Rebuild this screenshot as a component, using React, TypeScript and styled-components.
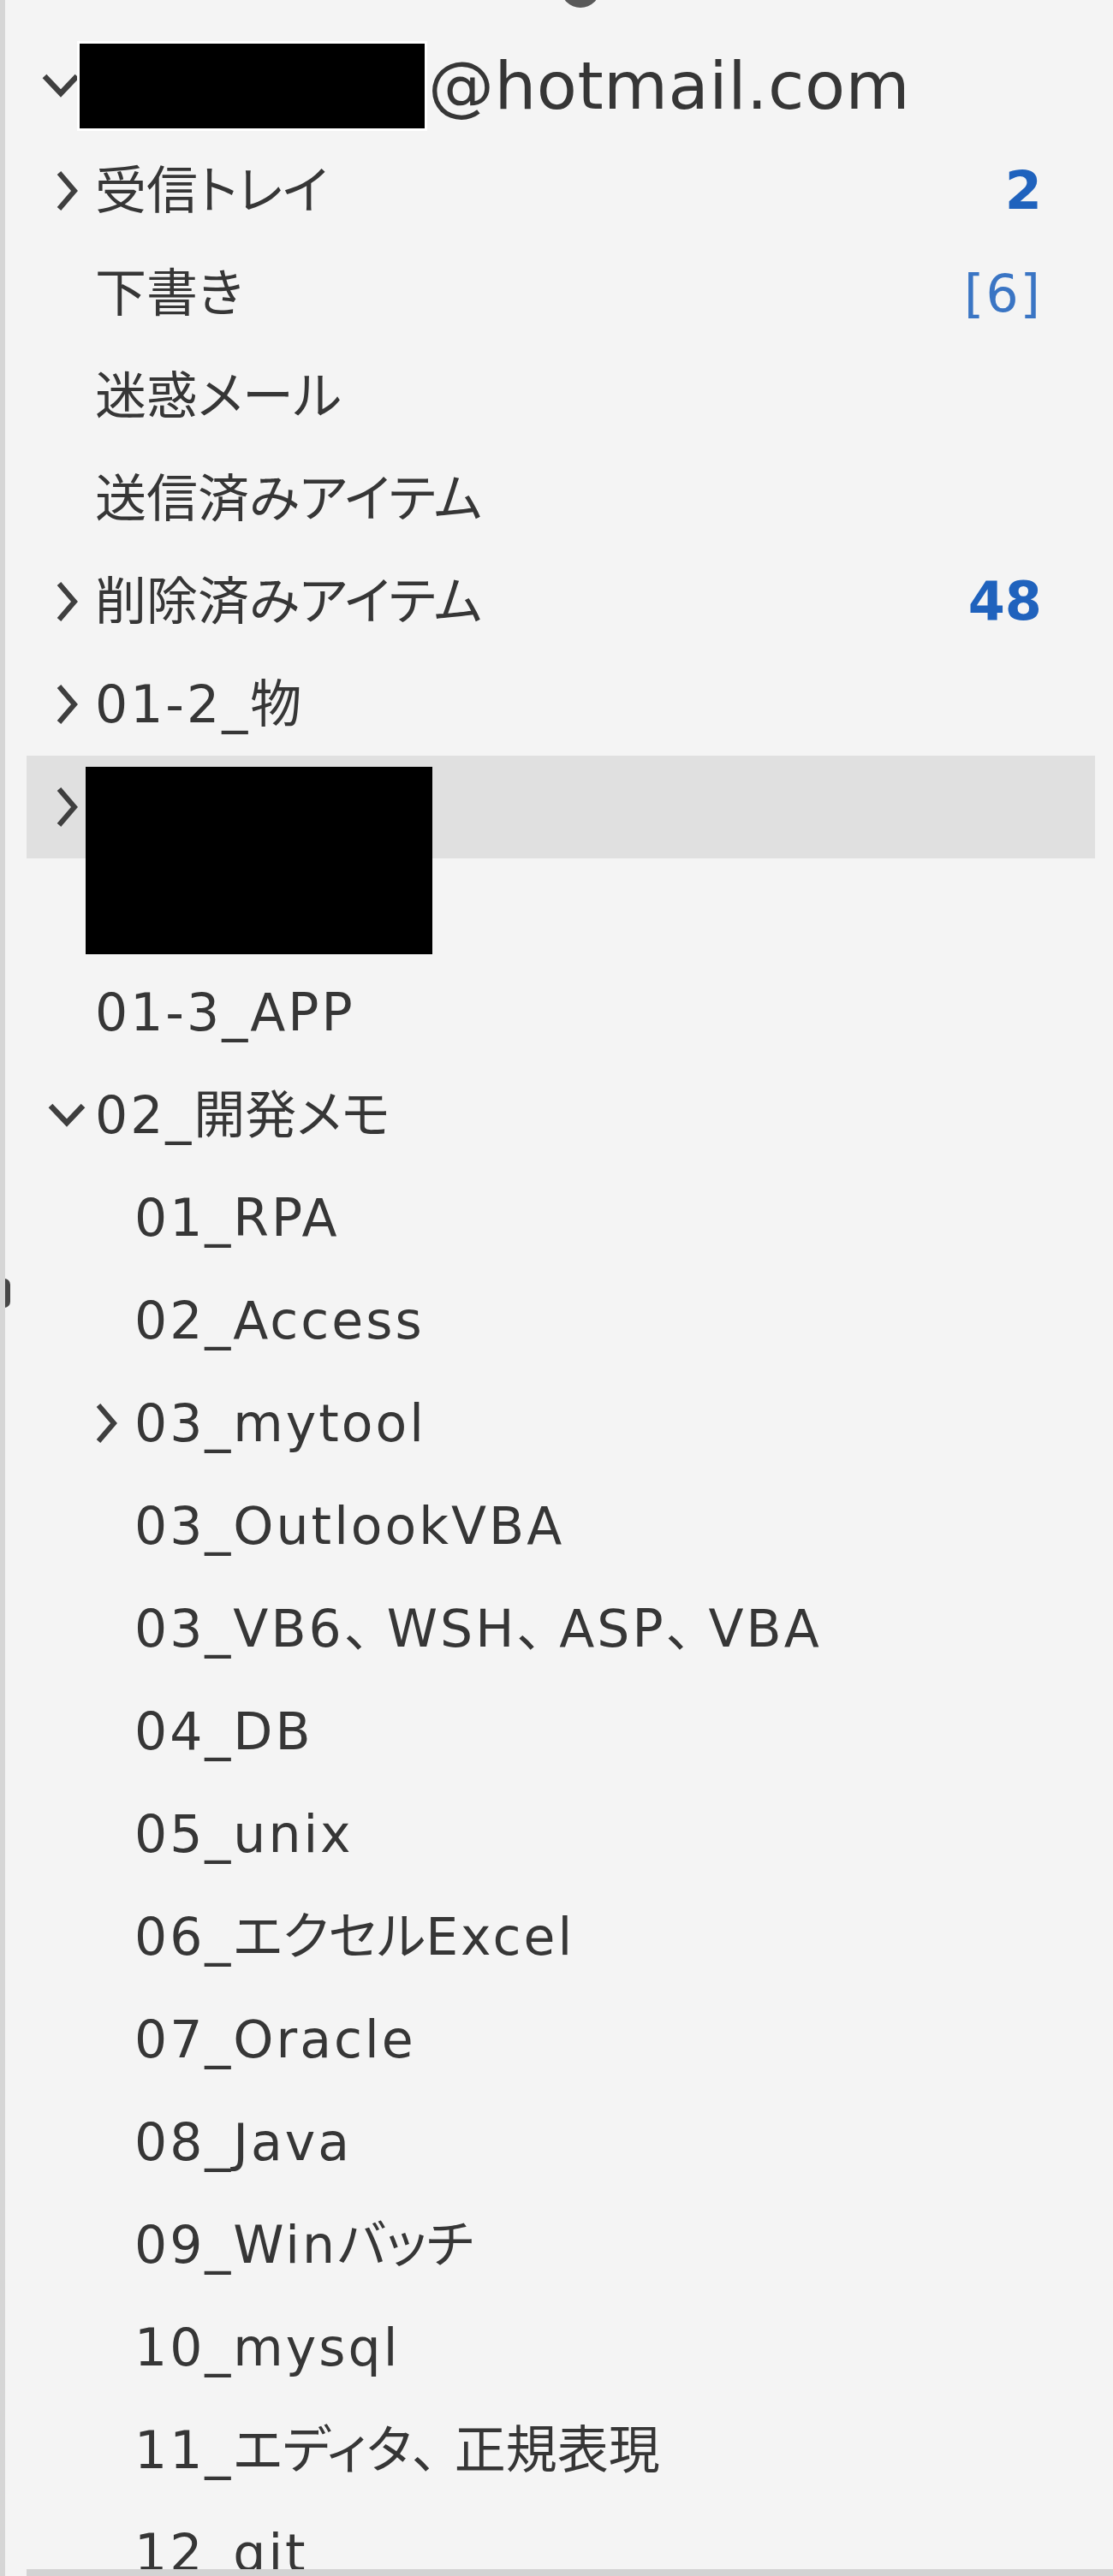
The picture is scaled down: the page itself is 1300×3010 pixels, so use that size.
import React from "react";
import styled, { createGlobalStyle } from "styled-components";

const GlobalStyle = createGlobalStyle`
  html, body {
    margin: 0;
    padding: 0;
    background: #f4f4f4;
  }
`;

const Pane = styled.div`
  position: relative;
  box-sizing: border-box;
  width: 1300px;
  height: 3010px;
  overflow: hidden;

  background-color: #f4f4f4;
  border-left: 6px solid #d6d6d6;

  font-family: "DejaVu Sans", "Noto Sans CJK JP", sans-serif;
  font-feature-settings: "palt";
  color: #363636;
`;

const TopDot = styled.div`
  position: absolute;
  top: -37px;
  left: 649px;
  width: 46px;
  height: 46px;
  border-radius: 50%;
  background-color: #595959;
`;

const SplitterGrip = styled.div`
  position: absolute;
  top: 1494px;
  left: -6px;
  width: 12px;
  height: 34px;
  border-radius: 0 7px 7px 0;
  background-color: #474747;
`;

const ScrollEdge = styled.div`
  position: absolute;
  left: 25px;
  right: 0;
  bottom: 0;
  height: 8px;
  background-color: #d3d3d3;
`;

const Tree = styled.div`
  display: flex;
  flex-direction: column;
  padding-top: 37px;
`;

const AccountRow = styled.div`
  display: flex;
  align-items: center;
  height: 126px;
  padding-left: 42px;

  font-size: 77px;
  line-height: 1;
  letter-spacing: 0.5px;
`;

const AccountChevron = styled.div`
  display: flex;
  align-items: center;
  width: 48px;
  margin-right: -3px;
`;

const Redaction = styled.div<{ $w: number; $h: number; $top?: number }>`
  flex: none;
  align-self: ${(p) => (p.$top !== undefined ? "flex-start" : "center")};
  margin-top: ${(p) => p.$top ?? 0}px;
  width: ${(p) => p.$w}px;
  height: ${(p) => p.$h}px;
  background-color: #000;
`;

const AccountRedaction = styled(Redaction)`
  box-shadow: 0 0 0 3px #ffffff;
  margin-right: 4px;
`;

const FolderRedaction = styled(Redaction)`
  margin-left: -11px;
`;

const Row = styled.div<{ $level: number; $selected?: boolean }>`
  display: flex;
  align-items: center;
  box-sizing: border-box;
  height: 120px;
  margin: 0 21px 0 25px;
  padding-left: ${(p) => 24 + (p.$level - 1) * 46}px;
  padding-right: 62px;

  background-color: ${(p) => (p.$selected ? "#e0e0e0" : "transparent")};
  font-size: 60px;
  line-height: 1;
  white-space: nowrap;
`;

const ChevronSlot = styled.div`
  flex: none;
  display: flex;
  align-items: center;
  width: 56px;
  height: 60px;
`;

const Label = styled.span`
  letter-spacing: 0;
`;

const Latin = styled.span`
  letter-spacing: 3px;
`;

const Comma = styled.span`
  font-feature-settings: normal;
  letter-spacing: -10px;
`;

const Count = styled.span<{ $bold?: boolean }>`
  margin-left: auto;
  font-size: ${(p) => (p.$bold ? 62 : 60)}px;
  font-weight: ${(p) => (p.$bold ? 700 : 400)};
  color: ${(p) => (p.$bold ? "#1f62bd" : "#3a75c4")};
  letter-spacing: ${(p) => (p.$bold ? 0 : 2)}px;
`;

const ChevronRight = () => (
  <svg width="40" height="48" viewBox="0 0 40 48" style={{ marginLeft: 10 }}>
    <polyline
      points="4,3 22,24 4,45"
      fill="none"
      stroke="#3f3f3f"
      strokeWidth="6"
      strokeLinejoin="miter"
    />
  </svg>
);

const ChevronDown = () => (
  <svg width="46" height="32" viewBox="0 0 46 32">
    <polyline
      points="4,5 23,25 42,5"
      fill="none"
      stroke="#3f3f3f"
      strokeWidth="6.5"
      strokeLinejoin="miter"
    />
  </svg>
);

type Folder = {
  name?: string;
  level: number;
  chevron?: "right" | "down";
  count?: string;
  bold?: boolean;
  selected?: boolean;
  redacted?: boolean;
};

const folders: Folder[] = [
  { name: "受信トレイ", level: 1, chevron: "right", count: "2", bold: true },
  { name: "下書き", level: 1, count: "[6]" },
  { name: "迷惑メール", level: 1 },
  { name: "送信済みアイテム", level: 1 },
  { name: "削除済みアイテム", level: 1, chevron: "right", count: "48", bold: true },
  { name: "01-2_物", level: 1, chevron: "right" },
  { level: 1, chevron: "right", selected: true, redacted: true },
  { level: 1 },
  { name: "01-3_APP", level: 1 },
  { name: "02_開発メモ", level: 1, chevron: "down" },
  { name: "01_RPA", level: 2 },
  { name: "02_Access", level: 2 },
  { name: "03_mytool", level: 2, chevron: "right" },
  { name: "03_OutlookVBA", level: 2 },
  { name: "03_VB6、WSH、ASP、VBA", level: 2 },
  { name: "04_DB", level: 2 },
  { name: "05_unix", level: 2 },
  { name: "06_エクセルExcel", level: 2 },
  { name: "07_Oracle", level: 2 },
  { name: "08_Java", level: 2 },
  { name: "09_Winバッチ", level: 2 },
  { name: "10_mysql", level: 2 },
  { name: "11_エディタ、正規表現", level: 2 },
  { name: "12_git", level: 2 },
];

// latin runs get extra tracking, the ideographic comma keeps most of its width
const splitRuns = (text: string) =>
  text
    .split(/([\x20-\x7e]+|、)/)
    .filter(Boolean)
    .map((part, i) => {
      if (part === "、") return <Comma key={i}>{part}</Comma>;
      if (/^[\x20-\x7e]+$/.test(part)) return <Latin key={i}>{part}</Latin>;
      return <span key={i}>{part}</span>;
    });

const FolderRow = ({ folder }: { folder: Folder }) => (
  <Row $level={folder.level} $selected={folder.selected}>
    <ChevronSlot>
      {folder.chevron === "right" && <ChevronRight />}
      {folder.chevron === "down" && <ChevronDown />}
    </ChevronSlot>
    {folder.redacted ? (
      <FolderRedaction $w={405} $h={219} $top={13} />
    ) : (
      folder.name && <Label>{splitRuns(folder.name)}</Label>
    )}
    {folder.count && <Count $bold={folder.bold}>{folder.count}</Count>}
  </Row>
);

export default function App() {
  return (
    <>
      <GlobalStyle />
      <Pane>
        <TopDot />
        <Tree>
          <AccountRow>
            <AccountChevron>
              <ChevronDown />
            </AccountChevron>
            <AccountRedaction $w={403} $h={99} />
            <span>@hotmail.com</span>
          </AccountRow>
          {folders.map((f, i) => (
            <FolderRow key={i} folder={f} />
          ))}
        </Tree>
        <SplitterGrip />
        <ScrollEdge />
      </Pane>
    </>
  );
}
